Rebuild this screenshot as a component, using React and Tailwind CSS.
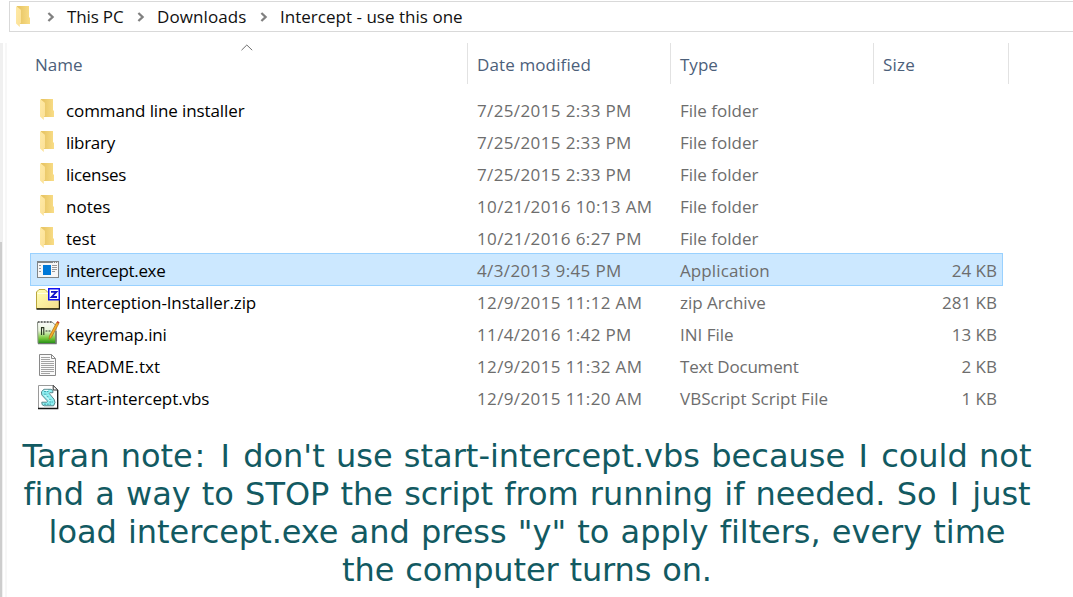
import React from "react";

function FolderIcon({ className }) {
  return (
    <svg viewBox="0 0 14 21" className={className}>
      <defs>
        <linearGradient id="folderBack" x1="0" y1="0" x2="1" y2="0">
          <stop offset="0.2" stopColor="#e9c767" />
          <stop offset="1" stopColor="#f9dd87" />
        </linearGradient>
        <linearGradient id="folderFront" x1="0" y1="0" x2="1" y2="1">
          <stop offset="0" stopColor="#ffeaa6" />
          <stop offset="1" stopColor="#fbe096" />
        </linearGradient>
      </defs>
      <path d="M1 0H13V11L14 12V18H4L1 17Z" fill="url(#folderBack)" />
      <path d="M0 0L4.6 3.6Q5 4 5 4.8V16.8L3.8 18V21L0 17.6Z" fill="url(#folderFront)" />
    </svg>
  );
}

function ApplicationIcon() {
  return (
    <svg viewBox="0 0 24 32" className="h-8 w-6" shapeRendering="crispEdges">
      <rect x="1" y="7" width="22" height="17" fill="#7f8588" />
      <rect x="2" y="9" width="20" height="14" fill="#f7f7f7" />
      <path d="M17 8h1M19 8h1M21 8h1" stroke="#e8e8e8" strokeWidth="1" transform="translate(0 .5)" />
      <rect x="7" y="11" width="8" height="10" fill="#0078d7" />
      <path d="M3 11.5h2M3 14.5h2M3 17.5h2M16 11.5h5M16 13.5h5M16 15.5h5M16 17.5h3" stroke="#999" strokeWidth="1" />
    </svg>
  );
}

function ZipIcon() {
  return (
    <svg viewBox="0 0 24 32" className="h-8 w-6">
      <defs>
        <linearGradient id="zipBody" x1="0" y1="0" x2="1" y2="1">
          <stop offset="0" stopColor="#ffffb4" />
          <stop offset="1" stopColor="#f4dd8c" />
        </linearGradient>
      </defs>
      <path d="M.5 22.5V6L3 3.5H9L12 6.5H23.5V22.5Z" fill="url(#zipBody)" stroke="#b9a63c" />
      <path d="M.5 23H23.5V13" fill="none" stroke="#1c1c10" strokeWidth="1.4" />
      <path d="M1.5 7.5H12" stroke="#fffde0" />
      <rect x="12.75" y="2.75" width="10.5" height="11" fill="#fff" stroke="#1010f0" strokeWidth="1.5" />
      <path d="M15 5.8H20.4L15.6 11H21" fill="none" stroke="#1414c8" strokeWidth="1.8" />
    </svg>
  );
}

function IniIcon() {
  return (
    <svg viewBox="0 0 24 32" className="h-8 w-6">
      <defs>
        <linearGradient id="iniPage" x1="0" y1="0" x2="0" y2="1">
          <stop offset="0" stopColor="#fafafa" />
          <stop offset="0.4" stopColor="#e9f5da" />
          <stop offset="0.75" stopColor="#79c83c" />
          <stop offset="1" stopColor="#1f8c14" />
        </linearGradient>
      </defs>
      <path d="M1.5 4H16L20 7.5V25.5H2Z" fill="url(#iniPage)" stroke="#8b9488" />
      <path d="M2 4H16" stroke="#555" strokeWidth="1.4" strokeDasharray="1.5 1.5" />
      <path d="M2 25.6H20V13" fill="none" stroke="#6d7770" strokeWidth="1.4" />
      <path d="M5.5 9.5V17M7.8 9.5V17M5 9.6H8.2M9.5 13H11.5M12.5 13H14.5" fill="none" stroke="#26331f" strokeWidth="1.1" />
      <path d="M20.6 4.5L22.8 5.6L15.5 19.3L13 21.3L13.5 18Z" fill="#f6ad28" stroke="#a96717" strokeWidth=".7" />
      <path d="M20.6 4.5L21.4 3.1L23.6 4.2L22.8 5.6Z" fill="#ce3d25" />
    </svg>
  );
}

function TextIcon() {
  return (
    <svg viewBox="0 0 24 32" className="h-8 w-6">
      <path d="M3.5 4.5H15.5L19.5 8.5V25.5H3.5Z" fill="#fafafa" stroke="#898989" />
      <path d="M15.5 4.5V8.5H19.5" fill="none" stroke="#898989" />
      <path d="M5 7.5h9M5 9.5h9M5 11.5h13M5 13.5h13M5 15.5h13M5 17.5h13M5 19.5h13M5 21.5h13M5 23.5h9" stroke="#a3a3a3" />
    </svg>
  );
}

function ScriptIcon() {
  return (
    <svg viewBox="0 0 24 32" className="h-8 w-6">
      <path d="M2.5 3.5H17.5L21.5 7.5V26.5H2.5Z" fill="#fff" stroke="#9a9a9a" />
      <path d="M2 26.5H21.7V8" fill="none" stroke="#161616" strokeWidth="1.3" />
      <path d="M17.2 3.5V8H21.8Z" fill="#fff" stroke="#333" />
      <path
        d="M8 7.3H14.8Q17.6 7.6 17 10.6L15 10.8Q13.6 10.2 13.2 11.4L18 17.2Q20.2 20.5 17.6 23.8H8.2Q5.2 23.2 5.8 20.2H10.8Q11.8 19.8 11.2 18.8L5.8 13Q4 9.4 8 7.3Z"
        fill="#8ff0f2"
        stroke="#4d7b80"
        strokeWidth=".9"
      />
      <path d="M8 9.6H12.5M7.8 12.2H11.2M10.4 14.8H13.2M12.6 17.4H15.6M13.4 20H17M8 22.2H15" stroke="#2f9aa2" strokeWidth=".9" strokeDasharray="2 .8" />
      <path d="M8.4 8.4H12M8.4 12.8L14 18.8" stroke="#f2ffff" strokeWidth="1" />
    </svg>
  );
}

function RowFolderIcon() {
  return <FolderIcon className="mt-[5px] ml-1 h-[21px] w-[14px]" />;
}

const files = [
  { name: "command line installer", track: "tracking-[-0.11px]", date: "7/25/2015 2:33 PM", type: "File folder", Icon: RowFolderIcon },
  { name: "library", track: "tracking-[-0.27px]", date: "7/25/2015 2:33 PM", type: "File folder", Icon: RowFolderIcon },
  { name: "licenses", track: "tracking-[-0.29px]", date: "7/25/2015 2:33 PM", type: "File folder", Icon: RowFolderIcon },
  { name: "notes", track: "", date: "10/21/2016 10:13 AM", type: "File folder", Icon: RowFolderIcon },
  { name: "test", track: "", date: "10/21/2016 6:27 PM", type: "File folder", Icon: RowFolderIcon },
  { name: "intercept.exe", track: "tracking-[-0.35px]", date: "4/3/2013 9:45 PM", type: "Application", typeTrack: "tracking-[0.1px]", size: "24 KB", Icon: ApplicationIcon, selected: true },
  { name: "Interception-Installer.zip", track: "tracking-[-0.12px]", date: "12/9/2015 11:12 AM", type: "zip Archive", size: "281 KB", Icon: ZipIcon },
  { name: "keyremap.ini", track: "tracking-[-0.15px]", date: "11/4/2016 1:42 PM", type: "INI File", size: "13 KB", Icon: IniIcon },
  { name: "README.txt", track: "tracking-[0.1px]", date: "12/9/2015 11:32 AM", type: "Text Document", typeTrack: "tracking-[-0.2px]", size: "2 KB", Icon: TextIcon },
  { name: "start-intercept.vbs", track: "tracking-[-0.09px]", date: "12/9/2015 11:20 AM", type: "VBScript Script File", typeTrack: "tracking-[0.05px]", size: "1 KB", Icon: ScriptIcon },
];

function Chevron() {
  return (
    <svg viewBox="0 0 8 10" className="h-[10px] w-2 shrink-0">
      <path d="M1.4 1L5.6 5L1.4 9" fill="none" stroke="#808080" strokeWidth="2.3" />
    </svg>
  );
}

function Breadcrumb() {
  return (
    <div className="mt-px ml-[9px] flex h-[31px] items-center overflow-hidden border border-r-0 border-[#d9d9d9] pl-1.5 leading-[30px] text-[#111]">
      <FolderIcon className="h-[21px] w-[14px] shrink-0" />
      <span className="ml-[17px] flex"><Chevron /></span>
      <span className="ml-3 w-[70px] tracking-[-0.15px]">This PC</span>
      <Chevron />
      <span className="ml-3 w-[103px] tracking-[0.1px]">Downloads</span>
      <Chevron />
      <span className="ml-3 tracking-[0.02px]">Intercept - use this one</span>
    </div>
  );
}

function Header() {
  return (
    <div className="flex h-[41px] leading-[43px] text-[#4c607a]">
      <div className="relative w-[438px] border-r border-[#e2e2e2] pl-[5px]">
        Name
        <svg viewBox="0 0 12 7" className="absolute top-px left-[211px] h-[7px] w-3">
          <path d="M.5 6.2L5.8 1L11.2 6.2" fill="none" stroke="#6e6e6e" />
        </svg>
      </div>
      <div className="w-[203px] border-r border-[#e2e2e2] pl-[9px] tracking-[0.12px]">Date modified</div>
      <div className="w-[203px] border-r border-[#e2e2e2] pl-[9px]">Type</div>
      <div className="w-[135px] border-r border-[#e2e2e2] pl-[9px] tracking-[0.2px]">Size</div>
    </div>
  );
}

function FileRow({ name, track, date, type, typeTrack, size, Icon, selected }) {
  return (
    <div
      className={
        "flex h-8 w-[973px] leading-[34px] text-[#6d6d6d] " +
        (selected
          ? "bg-[#cce8ff] shadow-[0_-1px_0_#99d1ff,inset_1px_0_0_#99d1ff,inset_-1px_0_0_#99d1ff,inset_0_-1px_0_#99d1ff]"
          : "")
      }
    >
      <div className="ml-1.5 w-[30px] shrink-0"><Icon /></div>
      <div className={"w-[411px] text-black " + track}>{name}</div>
      <div className="w-[203px] tracking-[0.37px]">{date}</div>
      <div className={"w-[203px] " + (typeTrack || "")}>{type}</div>
      <div className="flex-1 pr-1.5 text-right">{size}</div>
    </div>
  );
}

function WideI() {
  return <span className="mx-[2px]">I</span>;
}

export default function App() {
  return (
    <div className="h-[597px] w-[1073px] overflow-hidden bg-white font-['Open_Sans','Noto_Sans',sans-serif] text-[17px] whitespace-nowrap">
      <Breadcrumb />
      <div className="mt-[11px] flex h-[554px]">
        <div className="w-[3px] bg-[#f0f0f0] pt-[199px]">
          <div className="h-full w-0.5 bg-[#cdcdcd]" />
        </div>
        <div className="ml-0.5 w-0.5 bg-[#f7f7f7]" />
        <main className="ml-[23px] flex-1">
          <Header />
          <div className="mt-2.5">
            {files.map((file) => (
              <FileRow key={file.name} {...file} />
            ))}
          </div>
          <div className="mt-[23px] -ml-[30px] w-[1054px] text-center font-['DejaVu_Sans',Verdana,sans-serif] text-[32px] leading-[38px] [word-spacing:1.1px] text-[#125a62]">
            <p>
              Taran note<span className="mx-[1.8px]">:</span> <WideI /> don't use start-intercept.vbs because <WideI /> could not
            </p>
            <p className="tracking-[-0.04px]">
              find a way to STOP the script from running if needed. So <WideI /> just
            </p>
            <p className="tracking-[-0.04px]">load intercept.exe and press "y" to apply filters, every time</p>
            <p className="tracking-[-0.15px]">the computer turns on.</p>
          </div>
        </main>
      </div>
    </div>
  );
}
